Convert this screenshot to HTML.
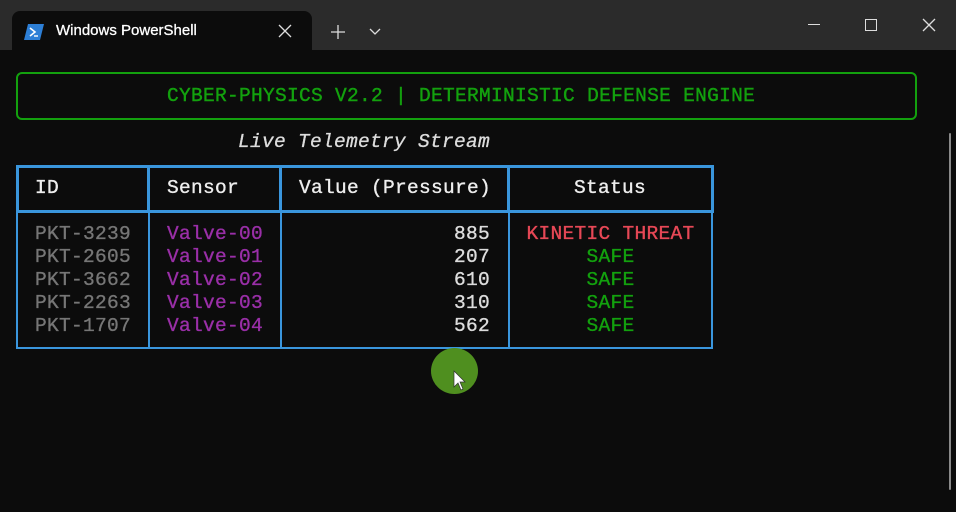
<!DOCTYPE html>
<html><head><style>
body{margin:0;width:956px;height:512px;background:#0c0c0c;overflow:hidden;position:relative;font-family:"Liberation Mono",monospace;}
.a{position:absolute;white-space:pre;}
.m{font-size:19.5px;line-height:23px;letter-spacing:0.3px;}
</style></head><body>
<div class="a" style="left:0;top:0;width:956px;height:50px;background:#2b2b2b"></div>
<div class="a" style="left:12px;top:11px;width:300px;height:42px;background:#0c0c0c;border-radius:8px 8px 0 0"></div>
<svg class="a" style="left:24px;top:24px" width="20" height="16"><polygon points="4,0 20,0 16,16 0,16" fill="#2d7fd6"/><polyline points="6,4 11,8 6,12" stroke="#fff" stroke-width="1.6" fill="none"/><line x1="10" y1="12" x2="14" y2="12" stroke="#fff" stroke-width="1.4"/></svg>
<div class="a" style="left:56px;top:22px;font-family:'Liberation Sans',sans-serif;font-size:15px;color:#fff;-webkit-text-stroke:0.3px #fff">Windows PowerShell</div>
<svg class="a" style="left:278px;top:24px" width="14" height="14"><path d="M1 1L13 13M13 1L1 13" stroke="#ddd" stroke-width="1.3"/></svg>
<svg class="a" style="left:330px;top:24px" width="16" height="16"><path d="M8 1V15M1 8H15" stroke="#ddd" stroke-width="1.3"/></svg>
<svg class="a" style="left:369px;top:28px" width="12" height="8"><path d="M1 1L6 6L11 1" stroke="#ddd" stroke-width="1.3" fill="none"/></svg>
<div class="a" style="left:808px;top:24px;width:12px;height:1px;background:#ddd"></div>
<div class="a" style="left:865px;top:19px;width:10px;height:10px;border:1.3px solid #ddd"></div>
<svg class="a" style="left:922px;top:18px" width="14" height="14"><path d="M1 1L13 13M13 1L1 13" stroke="#ddd" stroke-width="1.3"/></svg>
<div class="a" style="left:949px;top:133px;width:2px;height:357px;background:#8a8a8a;border-radius:1px"></div>

<div class="a" style="left:16px;top:72px;width:897px;height:44px;border:2px solid #13a10e;border-radius:6px"></div>
<div class="a m" style="left:167px;top:85px;color:#13a10e;-webkit-text-stroke:0.4px #13a10e">CYBER-PHYSICS V2.2 | DETERMINISTIC DEFENSE ENGINE</div>
<div class="a m" style="left:238px;top:131px;color:#ddd;font-style:italic;-webkit-text-stroke:0.3px #ddd">Live Telemetry Stream</div>

<div class="a" style="left:16px;top:165px;width:692px;height:42px;border:3px solid #3a96dd"></div>
<div class="a" style="left:147px;top:165px;width:3px;height:47px;background:#3a96dd"></div>
<div class="a" style="left:279px;top:165px;width:3px;height:47px;background:#3a96dd"></div>
<div class="a" style="left:507px;top:165px;width:3px;height:47px;background:#3a96dd"></div>
<div class="a" style="left:16px;top:210px;width:693px;height:137px;border:2px solid #3a96dd;border-top:none"></div>
<div class="a" style="left:148px;top:210px;width:2px;height:139px;background:#3a96dd"></div>
<div class="a" style="left:280px;top:210px;width:2px;height:139px;background:#3a96dd"></div>
<div class="a" style="left:508px;top:210px;width:2px;height:139px;background:#3a96dd"></div>

<div style="-webkit-text-stroke:0.35px currentColor">
<div class="a m" style="left:35px;top:177px;color:#eee">ID</div>
<div class="a m" style="left:167px;top:177px;color:#eee">Sensor</div>
<div class="a m" style="left:299px;top:177px;color:#eee">Value (Pressure)</div>
<div class="a m" style="left:574px;top:177px;color:#eee">Status</div>

<div class="a m" style="left:35px;top:223px;color:#767676">PKT-3239
PKT-2605
PKT-3662
PKT-2263
PKT-1707</div>
<div class="a m" style="left:167px;top:223px;color:#9a2fa8">Valve-00
Valve-01
Valve-02
Valve-03
Valve-04</div>
<div class="a m" style="left:300px;top:223px;width:190px;text-align:right;color:#ddd">885
207
610
310
562</div>
<div class="a m" style="left:510px;top:223px;width:201px;text-align:center;color:#13a10e"><span style="color:#e74856">KINETIC THREAT</span>
SAFE
SAFE
SAFE
SAFE</div>
</div>

<div class="a" style="left:431px;top:348px;width:47px;height:46px;border-radius:50%;background:#4f8f1f"></div>
<svg class="a" style="left:453px;top:370px" width="14" height="22"><path d="M1 1V17L5 13L8 20L10 19L7 12H12Z" fill="#fff" stroke="#333" stroke-width="0.7"/></svg>
</body></html>
